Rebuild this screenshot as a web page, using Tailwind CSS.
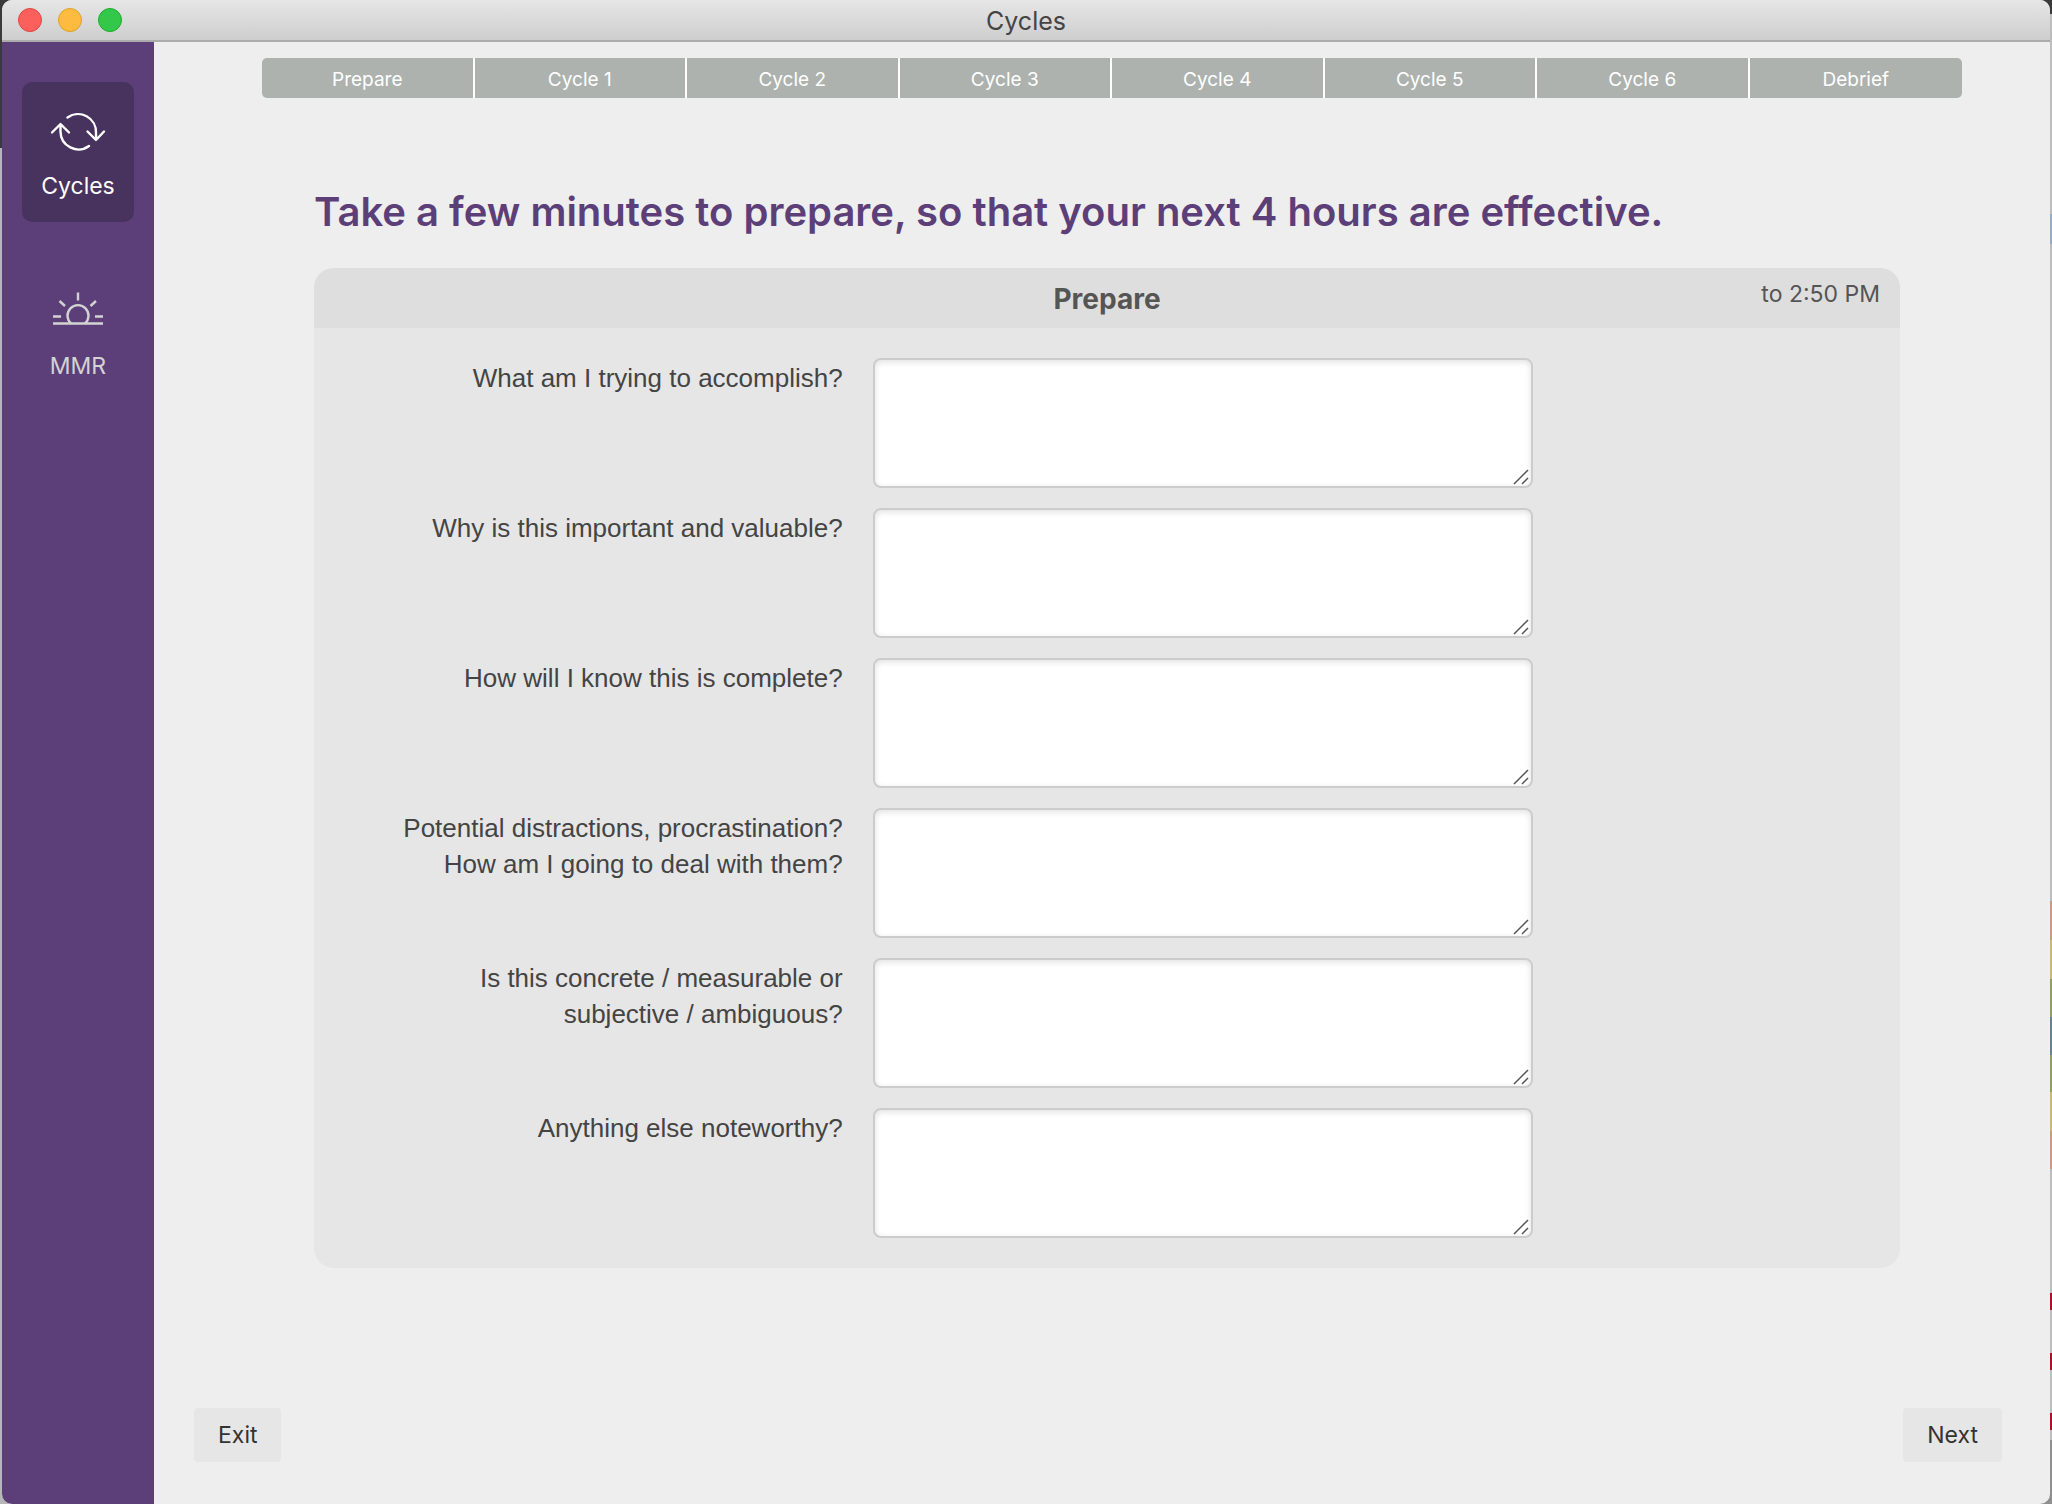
<!DOCTYPE html>
<html lang="en">
<head>
    <meta charset="UTF-8">
    <meta name="viewport" content="width=device-width, initial-scale=1.0">
    <title>Cycles</title>
    <script src="https://cdn.jsdelivr.net/npm/@tailwindcss/browser@4"></script>
    <style>
        /* Desktop showing at the edges, behind the window */
        body {
            background-image:
                linear-gradient(#3a3a3a 14px, #bdbdbd 14px 214px, #8faecb 214px 244px, #bdbdbd 244px 901px,
                    #c69c7c 901px 940px, #d0b37c 940px 979px, #8f9e67 979px 1017px, #5f8496 1017px 1055px,
                    #8f9e67 1055px 1092px, #d0b37c 1092px 1131px, #c69c7c 1131px 1169px, #bdbdbd 1169px 1293px,
                    #a9131f 1293px 1310px, #bdbdbd 1310px 1353px, #a9131f 1353px 1370px, #bdbdbd 1370px 1413px,
                    #a9131f 1413px 1430px, #bdbdbd 1430px 1440px, #8f8f8f 1440px),
                linear-gradient(#3a3a3a 148px, #b5b8b6 148px);
            background-size: 12px 100%, 12px 100%;
            background-position: right top, left top;
            background-repeat: no-repeat;
        }
    </style>
</head>
<body class="min-h-screen flex px-[2px] font-['Inter',sans-serif] text-[#444444]">
    <div class="flex-1 flex flex-col rounded-[10px] overflow-hidden bg-[#eeeeee]">
        <!-- Title bar -->
        <header class="relative h-[42px] flex items-center justify-center border-b-2 border-[#acacac] bg-linear-to-b from-[#e6e6e6] to-[#cecece]">
            <div class="absolute left-4 flex gap-4">
                <button type="button" aria-label="Close" class="size-6 rounded-full border border-[#e2463f] bg-[#fc605c]"></button>
                <button type="button" aria-label="Minimize" class="size-6 rounded-full border border-[#dfa023] bg-[#fdbc40]"></button>
                <button type="button" aria-label="Zoom" class="size-6 rounded-full border border-[#1dad2b] bg-[#34c84a]"></button>
            </div>
            <h1 class="pt-[3px] text-[25px]">Cycles</h1>
        </header>

        <div class="flex-1 flex">
            <!-- Sidebar -->
            <nav class="w-[152px] shrink-0 bg-[#5c3f78] px-5 pt-10 flex flex-col gap-10 text-[23px]">
                <a href="#cycles" class="h-[140px] rounded-[10px] bg-[#48325e] text-white flex flex-col items-center pt-[25px]">
                    <svg class="w-[56px] h-[52px]" viewBox="0 0 56 52" fill="none" stroke="currentColor" stroke-width="2.4" stroke-linecap="round" stroke-linejoin="round">
                        <path d="M17.500 10.500A18 18 0 0 1 46 26V32M37.500 24.500L46 33L54 24.500"/>
                        <path d="M39 39A18 18 0 0 1 10.500 24.500V17.500M2 25.500L10.500 17L19 25.500"/>
                    </svg>
                    <span class="mt-[13px] leading-7">Cycles</span>
                </a>
                <a href="#mmr" class="h-[140px] rounded-[10px] text-[#d3d3d3] flex flex-col items-center pt-[25px]">
                    <svg class="w-[56px] h-[52px]" viewBox="0 0 56 52" fill="none" stroke="currentColor" stroke-width="2.4">
                        <path d="M3 36.500H53M3 29.500H11M45 29.500H53M28 5.500V13.500M9.500 14L15 19M46 14L40.500 19"/>
                        <path d="M21 36.500A10.500 10.500 0 1 1 35 36.500"/>
                    </svg>
                    <span class="mt-[13px] leading-7">MMR</span>
                </a>
            </nav>

            <main class="flex-1 flex flex-col">
                <!-- Progress -->
                <ol class="ml-[108px] mr-[88px] mt-4 h-10 grid grid-cols-8 rounded-[5px] overflow-hidden divide-x-2 divide-white bg-[#adb2ae] text-white text-[19px] text-center leading-[43px]">
                    <li>Prepare</li>
                    <li>Cycle 1</li>
                    <li>Cycle 2</li>
                    <li>Cycle 3</li>
                    <li>Cycle 4</li>
                    <li>Cycle 5</li>
                    <li>Cycle 6</li>
                    <li>Debrief</li>
                </ol>

                <div class="ml-[160px] mr-[150px] mt-[90px]">
                    <h2 class="text-[40px] leading-12 font-semibold text-[#5c3f78]">Take a few minutes to prepare, so that your next 4 hours are effective.</h2>

                    <form id="prepareForm" class="mt-8 rounded-[20px] overflow-hidden bg-[#e6e6e6]">
                        <div class="relative h-[60px] bg-[#dedede] text-[#555555]">
                            <h3 class="text-center text-[28px] leading-[62px] font-bold">Prepare</h3>
                            <span class="absolute right-5 top-3 text-[23px] leading-7">to 2:50 PM</span>
                        </div>
                        <div class="py-[30px] flex flex-col gap-5">
                            <div class="flex gap-[30px]">
                                <label for="accomplish" class="w-1/3 pt-0.5 text-right font-['Liberation_Sans',sans-serif] text-[26px] leading-9">What am I trying to accomplish?</label>
                                <div class="relative w-5/12">
                                    <textarea id="accomplish" name="accomplish" class="block w-full h-[130px] px-3 py-2 resize-none rounded-lg border-2 border-[#cccccc] bg-white text-[26px] inset-shadow-[0_2px_6px_rgba(0,0,0,0.12)]"></textarea>
                                    <svg class="absolute right-1 bottom-[3px] size-4 pointer-events-none" viewBox="0 0 16 16" stroke="#555555" stroke-width="1.500"><path d="M1 15L15 1M9 15L15 9"/></svg>
                                </div>
                            </div>
                            <div class="flex gap-[30px]">
                                <label for="important" class="w-1/3 pt-0.5 text-right font-['Liberation_Sans',sans-serif] text-[26px] leading-9">Why is this important and valuable?</label>
                                <div class="relative w-5/12">
                                    <textarea id="important" name="important" class="block w-full h-[130px] px-3 py-2 resize-none rounded-lg border-2 border-[#cccccc] bg-white text-[26px] inset-shadow-[0_2px_6px_rgba(0,0,0,0.12)]"></textarea>
                                    <svg class="absolute right-1 bottom-[3px] size-4 pointer-events-none" viewBox="0 0 16 16" stroke="#555555" stroke-width="1.500"><path d="M1 15L15 1M9 15L15 9"/></svg>
                                </div>
                            </div>
                            <div class="flex gap-[30px]">
                                <label for="complete" class="w-1/3 pt-0.5 text-right font-['Liberation_Sans',sans-serif] text-[26px] leading-9">How will I know this is complete?</label>
                                <div class="relative w-5/12">
                                    <textarea id="complete" name="complete" class="block w-full h-[130px] px-3 py-2 resize-none rounded-lg border-2 border-[#cccccc] bg-white text-[26px] inset-shadow-[0_2px_6px_rgba(0,0,0,0.12)]"></textarea>
                                    <svg class="absolute right-1 bottom-[3px] size-4 pointer-events-none" viewBox="0 0 16 16" stroke="#555555" stroke-width="1.500"><path d="M1 15L15 1M9 15L15 9"/></svg>
                                </div>
                            </div>
                            <div class="flex gap-[30px]">
                                <label for="distractions" class="w-1/3 pt-0.5 text-right font-['Liberation_Sans',sans-serif] text-[26px] leading-9">Potential distractions, procrastination?<br>How am I going to deal with them?</label>
                                <div class="relative w-5/12">
                                    <textarea id="distractions" name="distractions" class="block w-full h-[130px] px-3 py-2 resize-none rounded-lg border-2 border-[#cccccc] bg-white text-[26px] inset-shadow-[0_2px_6px_rgba(0,0,0,0.12)]"></textarea>
                                    <svg class="absolute right-1 bottom-[3px] size-4 pointer-events-none" viewBox="0 0 16 16" stroke="#555555" stroke-width="1.500"><path d="M1 15L15 1M9 15L15 9"/></svg>
                                </div>
                            </div>
                            <div class="flex gap-[30px]">
                                <label for="concrete" class="w-1/3 pt-0.5 text-right font-['Liberation_Sans',sans-serif] text-[26px] leading-9">Is this concrete / measurable or<br>subjective / ambiguous?</label>
                                <div class="relative w-5/12">
                                    <textarea id="concrete" name="concrete" class="block w-full h-[130px] px-3 py-2 resize-none rounded-lg border-2 border-[#cccccc] bg-white text-[26px] inset-shadow-[0_2px_6px_rgba(0,0,0,0.12)]"></textarea>
                                    <svg class="absolute right-1 bottom-[3px] size-4 pointer-events-none" viewBox="0 0 16 16" stroke="#555555" stroke-width="1.500"><path d="M1 15L15 1M9 15L15 9"/></svg>
                                </div>
                            </div>
                            <div class="flex gap-[30px]">
                                <label for="noteworthy" class="w-1/3 pt-0.5 text-right font-['Liberation_Sans',sans-serif] text-[26px] leading-9">Anything else noteworthy?</label>
                                <div class="relative w-5/12">
                                    <textarea id="noteworthy" name="noteworthy" class="block w-full h-[130px] px-3 py-2 resize-none rounded-lg border-2 border-[#cccccc] bg-white text-[26px] inset-shadow-[0_2px_6px_rgba(0,0,0,0.12)]"></textarea>
                                    <svg class="absolute right-1 bottom-[3px] size-4 pointer-events-none" viewBox="0 0 16 16" stroke="#555555" stroke-width="1.500"><path d="M1 15L15 1M9 15L15 9"/></svg>
                                </div>
                            </div>
                        </div>
                    </form>
                </div>

                <div class="mt-auto mb-[42px] ml-10 mr-12 flex justify-between text-[23px] leading-7 text-[#333333]">
                    <button type="button" class="px-6 py-[13px] rounded bg-[#e6e6e6]">Exit</button>
                    <button type="submit" form="prepareForm" class="px-6 py-[13px] rounded bg-[#e6e6e6]">Next</button>
                </div>
            </main>
        </div>
    </div>
</body>
</html>
